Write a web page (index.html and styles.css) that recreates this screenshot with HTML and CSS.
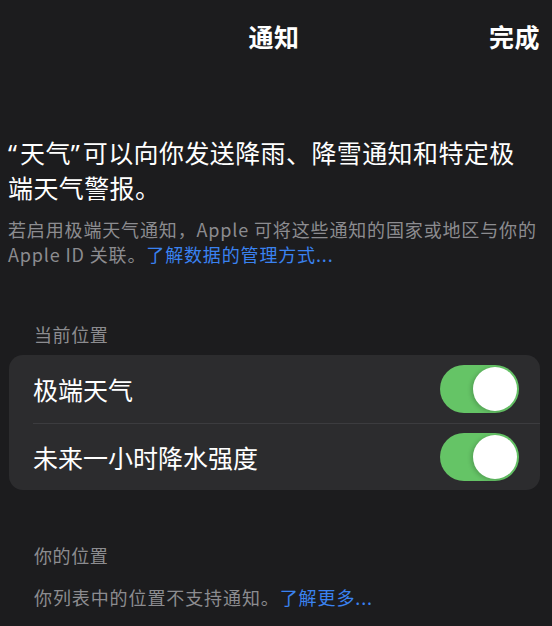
FILE: index.html
```html
<!DOCTYPE html>
<html lang="zh-CN">
<head>
<meta charset="utf-8">
<title>通知</title>
<link rel="stylesheet" href="styles.css">
</head>
<body>
<div class="page">
  <header class="nav">
    <span class="nav-spacer"></span>
    <h1 class="nav-title">通知</h1>
    <span class="nav-done">完成</span>
  </header>

  <main class="content">
    <p class="intro"><span class="quote">“</span>天气<span class="quote">”</span>可以向你发送降雨、降雪通知和特定极端天气警报。</p>
    <p class="note">若启用极端天气通知，Apple 可将这些通知的国家或地区与你的 Apple ID 关联。<span class="link">了解数据的管理方式...</span></p>

    <h2 class="section-title first">当前位置</h2>
    <div class="card">
      <div class="row">
        <span class="row-label">极端天气</span>
        <span class="toggle on"><span class="knob"></span></span>
      </div>
      <div class="row">
        <span class="row-label">未来一小时降水强度</span>
        <span class="toggle on"><span class="knob"></span></span>
      </div>
    </div>

    <h2 class="section-title second">你的位置</h2>
    <p class="section-note">你列表中的位置不支持通知。<span class="link">了解更多...</span></p>
  </main>
</div>
</body>
</html>
```

FILE: styles.css
```css
* {
  box-sizing: border-box;
}

html, body {
  margin: 0;
  padding: 0;
  background: #1c1c1e;
}

body {
  font-family: "Noto Sans CJK SC", "Noto Sans", sans-serif;
  color: #ffffff;
  width: 552px;
  height: 626px;
  overflow: hidden;
}

.page {
  display: flex;
  flex-direction: column;
}

.nav {
  display: grid;
  grid-template-columns: 1fr auto 1fr;
  align-items: center;
  height: 72px;
  padding: 0 12px 0 8px;
}

.nav-title {
  margin: 0;
  font-size: 25px;
  font-weight: 700;
  line-height: 72px;
  color: #ffffff;
  letter-spacing: 0.5px;
}

.nav-done {
  justify-self: end;
  font-size: 25px;
  font-weight: 700;
  line-height: 72px;
  color: #ffffff;
  letter-spacing: 0.5px;
}

.content {
  padding: 63px 12px 0 8px;
  display: flex;
  flex-direction: column;
}

.intro {
  margin: 0 4px 0 0;
  font-size: 25px;
  line-height: 34px;
  letter-spacing: 0.4px;
  color: #ffffff;
  font-weight: 400;
}

.quote {
  font-family: "Noto Sans", sans-serif;
  letter-spacing: 3px;
}

.note {
  margin: 13px 0 0;
  font-size: 18px;
  line-height: 25px;
  letter-spacing: 0.85px;
  color: #8c8c90;
}

.link {
  color: #3a82f0;
}

.section-title {
  margin: 0;
  padding-left: 26px;
  font-size: 18px;
  line-height: 25px;
  font-weight: 400;
  letter-spacing: 0.6px;
  color: #8c8c90;
}

.section-title.first {
  margin-top: 55px;
}

.section-title.second {
  margin-top: 53px;
}

.card {
  margin: 8px 0 0 1px;
  background: #2c2c2e;
  border-radius: 14px;
  display: flex;
  flex-direction: column;
  overflow: hidden;
}

.row {
  height: 67.5px;
  display: flex;
  align-items: center;
  justify-content: space-between;
  padding: 0 21px 0 24px;
}

.row + .row {
  border-top: 1px solid #3c3c3f;
  margin-left: 24px;
  padding-left: 0;
}

.row-label {
  font-size: 25px;
  line-height: 34px;
  color: #ffffff;
}

.toggle {
  width: 79px;
  height: 48px;
  border-radius: 24px;
  background: #65c466;
  display: flex;
  align-items: center;
  justify-content: flex-end;
  padding: 0 2px;
}

.knob {
  width: 44px;
  height: 44px;
  border-radius: 50%;
  background: #ffffff;
  box-shadow: -2px 1px 4px rgba(0, 0, 0, 0.18);
}

.section-note {
  margin: 17px 0 0;
  padding-left: 26px;
  font-size: 18px;
  line-height: 25px;
  letter-spacing: 0.9px;
  color: #8c8c90;
}
```
